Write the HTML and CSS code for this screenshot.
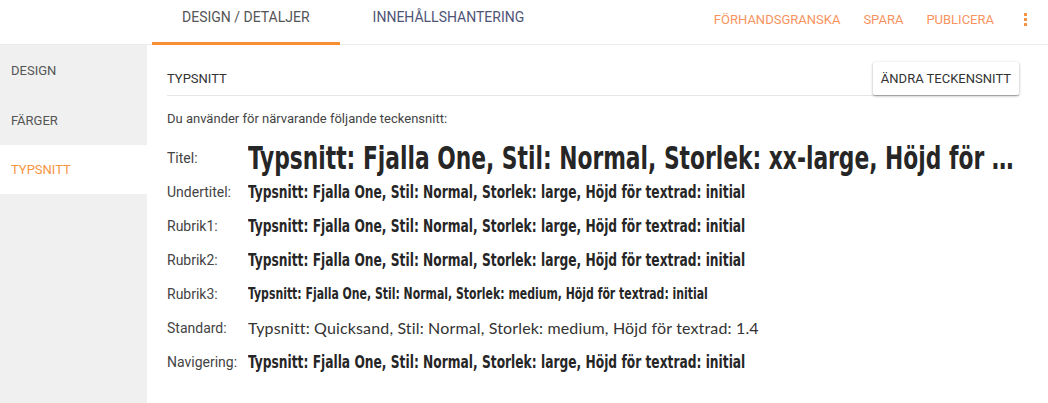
FILE: index.html
```html
<!DOCTYPE html>
<html lang="sv">
<head>
<meta charset="utf-8">
<title>Typsnitt</title>
<link rel="stylesheet" href="styles.css">
</head>
<body>
<div class="app">
  <header class="topbar">
    <nav class="tabs">
      <a class="tab active">Design / Detaljer</a>
      <a class="tab second">Innehållshantering</a>
    </nav>
    <div class="actions">
      <a class="action">Förhandsgranska</a>
      <a class="action">Spara</a>
      <a class="action">Publicera</a>
      <span class="kebab"><i></i><i></i><i></i></span>
    </div>
  </header>
  <div class="main">
    <aside class="sidebar">
      <a class="side-item">Design</a>
      <a class="side-item">Färger</a>
      <a class="side-item selected">Typsnitt</a>
    </aside>
    <section class="content">
      <div class="content-head">
        <span class="head-title">Typsnitt</span>
        <button class="btn">Ändra teckensnitt</button>
      </div>
      <p class="intro">Du använder för närvarande följande teckensnitt:</p>
      <div class="rows">
        <div class="row row-title">
          <span class="label">Titel:</span>
          <span class="value"><span class="fj v-xxl">Typsnitt: Fjalla One, Stil: Normal, Storlek: xx-large, Höjd för textrad: initial</span></span>
        </div>
        <div class="row">
          <span class="label">Undertitel:</span>
          <span class="value"><span class="fj v-l">Typsnitt: Fjalla One, Stil: Normal, Storlek: large, Höjd för textrad: initial</span></span>
        </div>
        <div class="row">
          <span class="label">Rubrik1:</span>
          <span class="value"><span class="fj v-l">Typsnitt: Fjalla One, Stil: Normal, Storlek: large, Höjd för textrad: initial</span></span>
        </div>
        <div class="row">
          <span class="label">Rubrik2:</span>
          <span class="value"><span class="fj v-l">Typsnitt: Fjalla One, Stil: Normal, Storlek: large, Höjd för textrad: initial</span></span>
        </div>
        <div class="row">
          <span class="label">Rubrik3:</span>
          <span class="value"><span class="fj v-m">Typsnitt: Fjalla One, Stil: Normal, Storlek: medium, Höjd för textrad: initial</span></span>
        </div>
        <div class="row">
          <span class="label">Standard:</span>
          <span class="value"><span class="std">Typsnitt: Quicksand, Stil: Normal, Storlek: medium, Höjd för textrad: 1.4</span></span>
        </div>
        <div class="row">
          <span class="label">Navigering:</span>
          <span class="value"><span class="fj v-l">Typsnitt: Fjalla One, Stil: Normal, Storlek: large, Höjd för textrad: initial</span></span>
        </div>
      </div>
    </section>
  </div>
</div>
</body>
</html>
```

FILE: styles.css
```css
html, body {
  margin: 0;
  padding: 0;
  background: #ffffff;
}
body {
  font-family: Roboto, "Liberation Sans", Arial, sans-serif;
  color: #444;
}
.app {
  width: 1048px;
  height: 403px;
  overflow: hidden;
  display: flex;
  flex-direction: column;
}
.topbar {
  height: 45px;
  box-sizing: border-box;
  border-bottom: 1px solid #ebebeb;
  display: flex;
  align-items: stretch;
  flex: none;
}
.tabs {
  display: flex;
  padding-left: 152px;
}
.tab {
  position: relative;
  display: flex;
  align-items: center;
  padding: 0 30px 10px;
  font-size: 14px;
  text-transform: uppercase;
  color: #555;
}
.tab.second {
  padding-left: 33px;
  color: #4f5477;
}
.tab.active::after {
  content: "";
  position: absolute;
  left: 0;
  right: 0;
  bottom: -1px;
  height: 3px;
  background: #f89033;
}
.actions {
  margin-left: auto;
  display: flex;
  align-items: center;
  gap: 23px;
  padding: 0 21px 6px 0;
}
.action {
  font-size: 13px;
  text-transform: uppercase;
  color: #f7935e;
}
.kebab {
  margin-left: 7px;
  display: flex;
  flex-direction: column;
  gap: 2px;
}
.kebab i {
  display: block;
  width: 3px;
  height: 3px;
  background: #f7903f;
  border-radius: 0.5px;
}
.main {
  flex: 1;
  display: flex;
}
.sidebar {
  width: 147px;
  flex: none;
  background: #f0f0f0;
  display: flex;
  flex-direction: column;
}
.side-item {
  height: 50px;
  display: flex;
  align-items: center;
  padding-left: 11px;
  font-size: 13px;
  text-transform: uppercase;
  color: #555;
}
.side-item.selected {
  height: 49px;
  background: #ffffff;
  color: #f8953f;
}
.content {
  flex: 1;
  min-width: 0;
  padding: 16px 29px 0 20px;
}
.content-head {
  height: 34px;
  border-bottom: 1px solid #e6e6e6;
  display: flex;
  align-items: center;
  justify-content: space-between;
}
.head-title {
  font-size: 13px;
  text-transform: uppercase;
  color: #333;
}
.btn {
  align-self: flex-end;
  height: 33px;
  padding: 0 8px;
  border: none;
  border-radius: 2px;
  background: #ffffff;
  box-shadow: 0 1px 3px rgba(0, 0, 0, 0.3), 0 1px 1px rgba(0, 0, 0, 0.12);
  font-family: Roboto, "Liberation Sans", Arial, sans-serif;
  font-size: 13px;
  text-transform: uppercase;
  color: #333;
}
.intro {
  margin: 16px 0 0;
  font-size: 13px;
  line-height: 14px;
  color: #444;
}
.rows {
  margin-top: 14px;
  display: flex;
  flex-direction: column;
}
.row {
  display: grid;
  grid-template-columns: 81px minmax(0, 1fr);
  align-items: center;
  height: 34px;
}
.row.row-title {
  height: 35px;
}
.label {
  font-size: 14px;
  color: #444;
}
.value {
  display: block;
  min-width: 0;
  overflow: hidden;
}
.fj {
  display: block;
  width: calc(100% / 0.757);
  transform: scaleX(0.757);
  transform-origin: left center;
  white-space: nowrap;
  overflow: hidden;
  text-overflow: ellipsis;
  color: #262626;
  font-family: "DejaVu Sans Condensed", "DejaVu Sans", sans-serif;
  font-weight: 700;
}
.v-xxl {
  font-size: 32px;
  line-height: 40px;
}
.v-l {
  font-size: 18px;
  line-height: 24px;
}
.v-m {
  font-size: 16px;
  line-height: 22px;
}
.std {
  display: block;
  white-space: nowrap;
  font-family: Lato, "Open Sans", sans-serif;
  font-weight: 400;
  font-size: 16px;
  line-height: 22px;
  letter-spacing: 0.15px;
  color: #333;
}
```
